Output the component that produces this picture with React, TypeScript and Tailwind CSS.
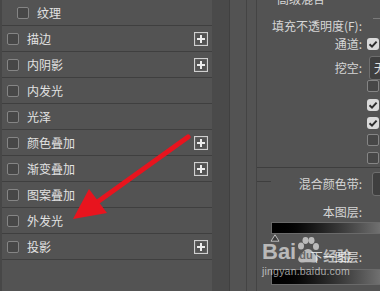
import React from 'react'

type Row = { label: string; indent?: boolean; plus?: boolean }

const rows: Row[] = [
  { label: '纹理', indent: true },
  { label: '描边', plus: true },
  { label: '内阴影', plus: true },
  { label: '内发光' },
  { label: '光泽' },
  { label: '颜色叠加', plus: true },
  { label: '渐变叠加', plus: true },
  { label: '图案叠加' },
  { label: '外发光' },
  { label: '投影', plus: true },
]

function Box({ checked = false }: { checked?: boolean }) {
  if (checked) {
    return (
      <div className="w-[12px] h-[12px] shrink-0 rounded-[3px] bg-[#dadada] flex items-center justify-center">
        <svg width="10" height="10" viewBox="0 0 10 10">
          <path d="M1.5 5.2 L4 7.6 L8.6 2.6" fill="none" stroke="#2e2e2e" strokeWidth="2" />
        </svg>
      </div>
    )
  }
  return <div className="w-[12px] h-[12px] shrink-0 rounded-[2px] border border-[#858585] bg-[#474747]" />
}

function PlusButton() {
  return (
    <svg width="14" height="14" viewBox="0 0 14 14" className="shrink-0">
      <rect x="0.5" y="0.5" width="13" height="13" fill="none" stroke="#cfcfcf" strokeWidth="1.2" />
      <rect x="3" y="6" width="8" height="2" fill="#ececec" />
      <rect x="6" y="3" width="2" height="8" fill="#ececec" />
    </svg>
  )
}

function LabelRow({ text, h = 14, children }: { text: string; h?: number; children?: React.ReactNode }) {
  return (
    <div className="flex items-center" style={{ height: h }}>
      <div className="w-[105px] shrink-0 text-right leading-[14px] whitespace-nowrap">{text}</div>
      {children}
    </div>
  )
}

export default function App() {
  return (
    <div className="relative w-[380px] h-[291px] overflow-hidden bg-[#535353] text-[12px] text-[#e2e2e2] font-['Noto_Sans_CJK_SC',sans-serif]">
      <div className="flex h-full">
        {/* Styles list */}
        <div className="w-[212px] shrink-0 border-l-2 border-[#474747]">
          {rows.map((r) => (
            <div key={r.label} className="h-[26px] flex items-center border-b border-[#3f3f3f]">
              <div className={r.indent ? 'ml-[15px]' : 'ml-[5px]'}>
                <Box />
              </div>
              <span className="ml-[8px] leading-[14px]">{r.label}</span>
              {r.plus && (
                <div className="ml-auto mr-[4px] flex">
                  <PlusButton />
                </div>
              )}
            </div>
          ))}
        </div>

        <div className="w-[17px] shrink-0 bg-[#4a4a4a]" />
        <div className="w-[17px] shrink-0 border-l border-[#404040]" />
        <div className="w-[10px] shrink-0 border-l border-[#444]" />

        {/* Blending options */}
        <div className="flex-1 border-l border-[#444] text-[#d6d6d6]">
          <div className="h-[176px] border-b border-[#3e3e3e]">
            <div className="-mt-[8px] h-[14px] pl-[20px] leading-[14px] whitespace-nowrap">高级混合</div>
            <div className="mt-[13px]">
              <LabelRow text="填充不透明度(F):">
                <div className="ml-[11px] mb-[14px] w-[20px] h-[2px] border-t border-[#7a7a7a]" />
              </LabelRow>
            </div>
            <div className="mt-[4px]">
              <LabelRow text="通道:">
                <div className="ml-[5px]">
                  <Box checked />
                </div>
              </LabelRow>
            </div>
            <div className="mt-[5px]">
              <LabelRow text="挖空:" h={24}>
                <div className="ml-[7px] h-[24px] w-[40px] rounded-[3px] border border-[#6e6e6e] bg-[#3f3f3f] pl-[4px] leading-[22px] text-[#e0e0e0]">
                  无
                </div>
              </LabelRow>
            </div>
            <div className="ml-[110px]">
              <Box />
            </div>
            <div className="ml-[110px] mt-[7px]">
              <Box checked />
            </div>
            <div className="ml-[110px] mt-[6px]">
              <Box checked />
            </div>
            <div className="ml-[110px] mt-[5px]">
              <Box />
            </div>
            <div className="ml-[110px] mt-[6px]">
              <Box />
            </div>
          </div>

          <div className="mt-[13px] w-[14px] h-px bg-[#3e3e3e]" />
          <div className="-mt-[10px]">
            <LabelRow text="混合颜色带:" h={24}>
              <div className="ml-[10px] h-[24px] w-[40px] rounded-[3px] border border-[#6e6e6e] bg-[#3f3f3f]" />
            </LabelRow>
          </div>
          <div className="mt-[9px]">
            <LabelRow text="本图层:" />
          </div>
          <div className="mt-[3px] ml-[14px] h-[12px] w-[200px] border border-[#6a6a6a] bg-gradient-to-r from-black to-white" />
          <div className="ml-[13px] h-[8px]">
            <svg width="10" height="8" viewBox="0 0 10 8">
              <path d="M5 0.8 L9 7.2 L1 7.2 Z" fill="#3a3a3a" stroke="#bdbdbd" strokeWidth="1" />
            </svg>
          </div>
          <div className="mt-[8px]">
            <LabelRow text="下一图层:" />
          </div>
          <div className="mt-[5px] ml-[14px] h-[16px] w-[200px] border border-[#6a6a6a] bg-gradient-to-r from-black to-white" />
        </div>
      </div>

      {/* Red arrow annotation */}
      <svg className="absolute inset-0 pointer-events-none" width="380" height="291" viewBox="0 0 380 291">
        <line x1="188" y1="137" x2="96" y2="203" stroke="#e8141e" strokeWidth="5" strokeLinecap="round" />
        <polygon points="73,219 107,213 89,189" fill="#e8141e" />
      </svg>

      {/* Baidu watermark */}
      <div className="absolute left-[262px] top-[237px] text-white/60 pointer-events-none">
        <div className="flex items-end">
          <span className="font-['Liberation_Sans',sans-serif] font-bold text-[22px] leading-[22px]">Bai</span>
          <div className="relative w-[24px] h-[26px] ml-[0px]">
            <svg width="24" height="26" viewBox="0 0 24 26" className="absolute inset-0">
              <ellipse cx="5" cy="9" rx="3" ry="3.6" fill="currentColor" />
              <ellipse cx="9.5" cy="3.5" rx="3" ry="3.4" fill="currentColor" />
              <ellipse cx="15.5" cy="3.5" rx="3" ry="3.4" fill="currentColor" />
              <ellipse cx="20" cy="9.5" rx="3" ry="3.6" fill="currentColor" />
              <path d="M12 12 C8 12 6 17 3 20 C1 23 3 26 7 25.5 C10 25 14 25 17 25.5 C21 26 23 23 21 20 C18 17 16 12 12 12 Z" fill="currentColor" />
            </svg>
            <span className="absolute left-[3px] top-[13px] font-['Liberation_Sans',sans-serif] font-bold text-[11px] leading-[11px] text-[#6a6a6a]">du</span>
          </div>
          <span className="ml-[3px] text-[14px] leading-[16px] font-bold">经验</span>
        </div>
        <div className="mt-[3px] font-['Liberation_Sans',sans-serif] text-[10.5px] leading-[11px] tracking-[0.2px]">jingyan.baidu.com</div>
      </div>
    </div>
  )
}
